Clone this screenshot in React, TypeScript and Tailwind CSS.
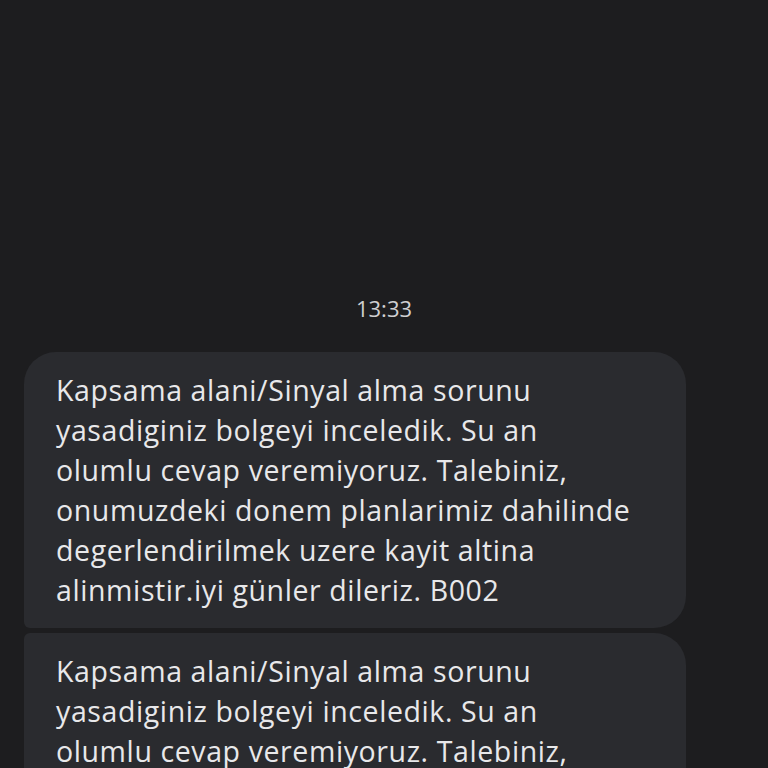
const lines = [
  'Kapsama alani/Sinyal alma sorunu',
  'yasadiginiz bolgeyi inceledik. Su an',
  'olumlu cevap veremiyoruz. Talebiniz,',
  'onumuzdeki donem planlarimiz dahilinde',
  'degerlendirilmek uzere kayit altina',
  'alinmistir.iyi günler dileriz. B002',
]

function Bubble({ first }: { first: boolean }) {
  return (
    <div
      className={
        'w-[662px] bg-[#2a2b2f] px-8 py-[18px] text-[28.5px] leading-[40px] tracking-[0.6px] text-[#e8e8ea] ' +
        (first
          ? 'rounded-tl-[32px] rounded-tr-[32px] rounded-br-[32px] rounded-bl-[6px]'
          : 'rounded-tl-[6px] rounded-tr-[32px] rounded-br-[32px] rounded-bl-[6px]')
      }
    >
      {lines.map((line) => (
        <div key={line} className="whitespace-nowrap">
          {line}
        </div>
      ))}
    </div>
  )
}

export default function App() {
  return (
    <div
      className="h-[768px] w-[768px] overflow-hidden bg-[#1d1d1f]"
      style={{ fontFamily: '"Open Sans", "Noto Sans", sans-serif' }}
    >
      <div className="flex flex-col pl-6 pt-[295px]">
        <div className="w-[720px] text-center text-[22px] leading-[26px] text-[#cfcfd1]">13:33</div>
        <div className="mt-[31px] flex flex-col gap-[5px]">
          <Bubble first />
          <Bubble first={false} />
        </div>
      </div>
    </div>
  )
}
